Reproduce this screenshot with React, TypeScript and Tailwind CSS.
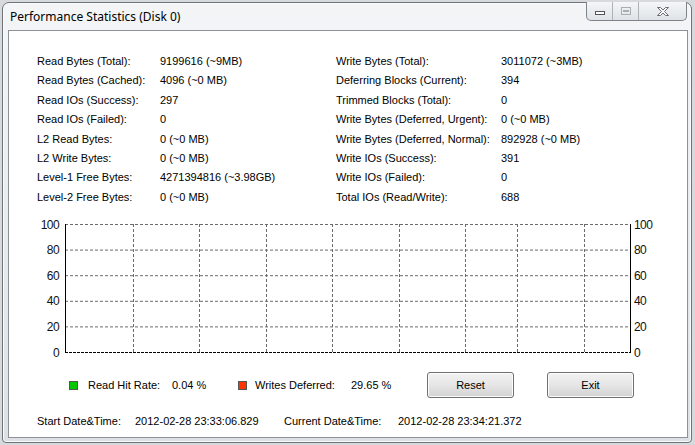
const leftStats: [string, string][] = [
  ['Read Bytes (Total):', '9199616 (~9MB)'],
  ['Read Bytes (Cached):', '4096 (~0 MB)'],
  ['Read IOs (Success):', '297'],
  ['Read IOs (Failed):', '0'],
  ['L2 Read Bytes:', '0 (~0 MB)'],
  ['L2 Write Bytes:', '0 (~0 MB)'],
  ['Level-1 Free Bytes:', '4271394816 (~3.98GB)'],
  ['Level-2 Free Bytes:', '0 (~0 MB)'],
];

const rightStats: [string, string][] = [
  ['Write Bytes (Total):', '3011072 (~3MB)'],
  ['Deferring Blocks (Current):', '394'],
  ['Trimmed Blocks (Total):', '0'],
  ['Write Bytes (Deferred, Urgent):', '0 (~0 MB)'],
  ['Write Bytes (Deferred, Normal):', '892928 (~0 MB)'],
  ['Write IOs (Success):', '391'],
  ['Write IOs (Failed):', '0'],
  ['Total IOs (Read/Write):', '688'],
];

const ticks = [100, 80, 60, 40, 20, 0];
const yOf = (v: number) => 10 + ((100 - v) / 100) * 128;
const vLines = [124, 190, 257, 323, 390, 456, 508, 575];

function Chart() {
  return (
    <svg width="679" height="148" className="block">
      {ticks.slice(0, 5).map((t) => (
        <line
          key={t}
          x1={56}
          x2={621}
          y1={yOf(t) + 0.5}
          y2={yOf(t) + 0.5}
          stroke="#6b6b6b"
          strokeDasharray="3 2"
        />
      ))}
      {vLines.map((x) => (
        <line key={x} x1={x + 0.5} x2={x + 0.5} y1={10} y2={138} stroke="#6b6b6b" strokeDasharray="3 2" />
      ))}
      <line x1={56} x2={621} y1={138.5} y2={138.5} stroke="#000" strokeDasharray="3 1" />
      <line x1={56.5} x2={56.5} y1={10} y2={139} stroke="#000" />
      <line x1={621.5} x2={621.5} y1={10} y2={139} stroke="#000" />
      {ticks.map((t) => (
        <g key={t} fontFamily="Liberation Sans, Arial, sans-serif" fontSize="12" fill="#111">
          <text x={50} y={yOf(t) + 4.5} textAnchor="end" letterSpacing="-0.6">
            {t}
          </text>
          <text x={625} y={yOf(t) + 4.5} letterSpacing="-0.6">
            {t}
          </text>
        </g>
      ))}
    </svg>
  );
}

function WinButton({ label }: { label: string }) {
  return (
    <button className="h-[26px] w-[87px] rounded-[3px] border border-[#707070] bg-linear-to-b from-[#f2f2f2] via-[#e6e6e6] to-[#d2d2d2] text-[11px] text-black shadow-[inset_0_0_0_1px_#fcfcfc]">
      {label}
    </button>
  );
}

export default function App() {
  return (
    <div className="h-[445px] w-[695px] overflow-hidden bg-[#d7dadd] font-['Liberation_Sans',Arial,sans-serif]">
      <div className="ml-[2px] mt-[2px] h-[441px] w-[690px] rounded-t-[7px] rounded-b-[4px] border border-[#6f7378] bg-linear-to-b from-[#f3f5f7] via-[#e9ecef] to-[#dde1e5] shadow-[inset_0_0_0_1px_#fafbfc]">
        <div className="flex h-[27px] items-start justify-between">
          <div className="pl-[7px] pt-[5px] font-['Noto_Sans','Open_Sans',sans-serif] text-[12px] leading-[18px] text-black">
            Performance Statistics (Disk 0)
          </div>
          <div className="mr-[4px] flex h-[19px] -mt-px overflow-hidden rounded-b-[5px] border border-t-0 border-[#7d8389] bg-linear-to-b from-[#f4f6f8] to-[#dfe3e7]">
            <div className="flex w-[26px] items-center justify-center border-r border-[#aeb3b8]">
              <div className="mt-[3px] h-[4px] w-[10px] border border-[#555] bg-white" />
            </div>
            <div className="flex w-[26px] items-center justify-center border-r border-[#aeb3b8]">
              <div className="flex h-[8px] w-[10px] items-center justify-center border border-[#a9aeb3]">
                <div className="h-[2px] w-[6px] border border-[#a9aeb3]" />
              </div>
            </div>
            <div className="flex w-[47px] items-center justify-center">
              <svg width="14" height="11" viewBox="0 0 14 11">
                <path
                  d="M1.5 1.5h3l2.5 2.5 2.5-2.5h3l-4 4 4 4h-3l-2.5-2.5-2.5 2.5h-3l4-4z"
                  fill="#fafafa"
                  stroke="#6a6f74"
                  strokeLinejoin="round"
                />
              </svg>
            </div>
          </div>
        </div>
        <div className="ml-[5px] h-[408px] w-[680px] border border-[#8c9196] bg-white text-[11px] text-black">
          <div className="flex pt-[21px] pl-[28px] leading-[19.4px]">
            <div className="w-[299px]">
              {leftStats.map(([k, v]) => (
                <div key={k} className="flex h-[19.4px]">
                  <span className="w-[123px]">{k}</span>
                  <span>{v}</span>
                </div>
              ))}
            </div>
            <div>
              {rightStats.map(([k, v]) => (
                <div key={k} className="flex h-[19.4px]">
                  <span className="w-[165px]">{k}</span>
                  <span>{v}</span>
                </div>
              ))}
            </div>
          </div>
          <div className="mt-[7px]">
            <Chart />
          </div>
          <div className="mt-[10px] flex h-[26px] items-center">
            <div className="ml-[60px] h-[9px] w-[9px] border border-[#555] bg-[#00c800]" />
            <span className="ml-[10px] w-[84px]">Read Hit Rate:</span>
            <span className="w-[66px]">0.04 %</span>
            <div className="h-[9px] w-[9px] border border-[#555] bg-[#ff3300]" />
            <span className="ml-[8px] w-[96px]">Writes Deferred:</span>
            <span className="w-[76px]">29.65 %</span>
            <WinButton label="Reset" />
            <div className="ml-[33px]">
              <WinButton label="Exit" />
            </div>
          </div>
          <div className="mt-[16px] flex pl-[28px] leading-[14px]">
            <span className="w-[98px]">Start Date&amp;Time:</span>
            <span className="w-[149px]">2012-02-28 23:33:06.829</span>
            <span className="w-[114px]">Current Date&amp;Time:</span>
            <span>2012-02-28 23:34:21.372</span>
          </div>
        </div>
      </div>
    </div>
  );
}
